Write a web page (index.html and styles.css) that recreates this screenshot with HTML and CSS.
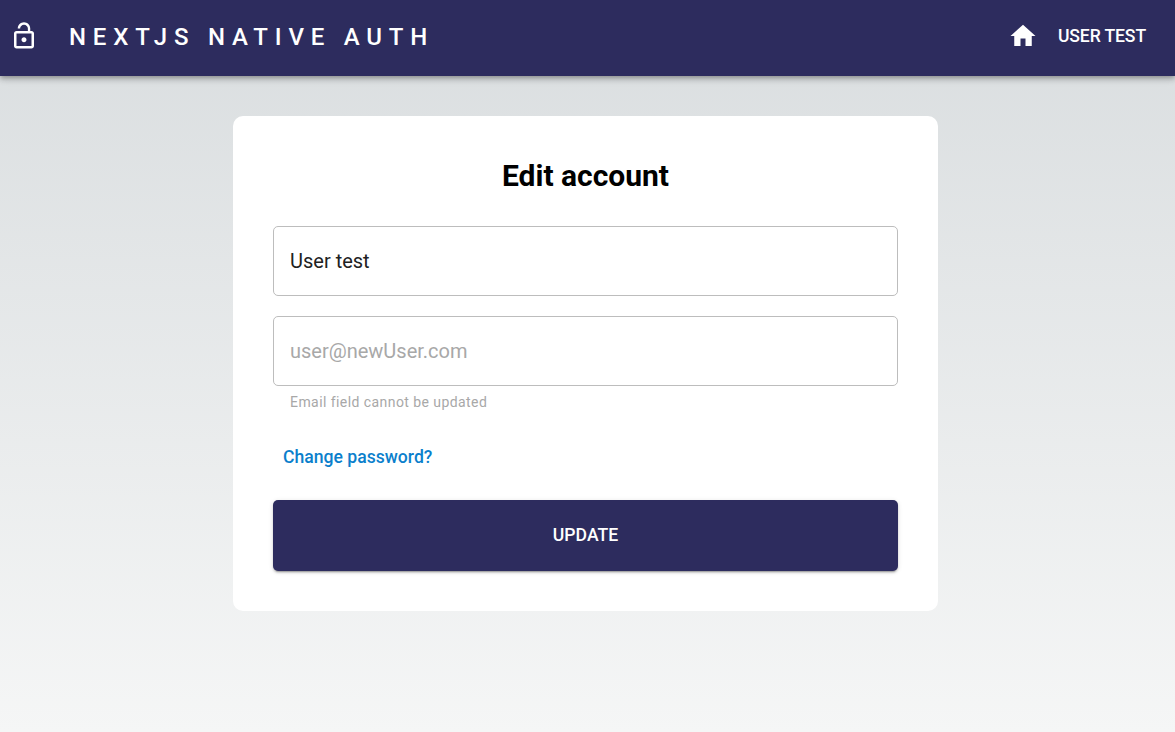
FILE: index.html
```html
<!DOCTYPE html>
<html lang="en">
<head>
    <meta charset="UTF-8">
    <meta name="viewport" content="width=device-width, initial-scale=1.0">
    <title>Edit account</title>
    <link rel="stylesheet" href="styles.css">
</head>
<body>
    <header class="topbar">
        <svg class="topbar-icon" viewBox="0 0 24 24" aria-hidden="true">
            <path d="M12 17c1.1 0 2-.9 2-2s-.9-2-2-2-2 .9-2 2 .9 2 2 2zm6-9h-1V6c0-2.76-2.24-5-5-5S7 3.24 7 6h1.9c0-1.71 1.39-3.1 3.1-3.1 1.71 0 3.1 1.39 3.1 3.1v2H6c-1.1 0-2 .9-2 2v10c0 1.1.9 2 2 2h12c1.1 0 2-.9 2-2V10c0-1.1-.9-2-2-2zm0 12H6V10h12v10z"/>
        </svg>
        <a class="brand" href="#">NEXTJS NATIVE AUTH</a>
        <nav class="topbar-nav">
            <a href="#" aria-label="Home">
                <svg class="topbar-icon" viewBox="0 0 24 24" aria-hidden="true">
                    <path d="M10 20v-6h4v6h5v-8h3L12 3 2 12h3v8z"/>
                </svg>
            </a>
            <a class="user-link" href="#">User test</a>
        </nav>
    </header>

    <main class="page">
        <form class="card">
            <h1>Edit account</h1>
            <input class="field" type="text" value="User test">
            <input class="field field-gap" type="email" placeholder="user@newUser.com" disabled>
            <p class="helper">Email field cannot be updated</p>
            <a class="password-link" href="#">Change password?</a>
            <button type="button">Update</button>
        </form>
    </main>
</body>
</html>
```

FILE: styles.css
```css
* {
    box-sizing: border-box;
}
html, body {
    height: 100%;
}
body {
    margin: 0;
    font-family: Roboto, Arial, sans-serif;
    background: linear-gradient(#d9dddf 0%, #f5f6f6 100%);
    overflow: hidden;
}
a {
    text-decoration: none;
}
.topbar {
    display: flex;
    align-items: center;
    height: 76px;
    padding: 0 29px 4px 9px;
    background-color: #2d2c5e;
    box-shadow: 0 2px 4px -1px rgba(0,0,0,0.2), 0 4px 5px 0 rgba(0,0,0,0.14), 0 1px 10px 0 rgba(0,0,0,0.12);
}
.topbar-icon {
    display: block;
    width: 30px;
    height: 30px;
    fill: #fff;
}
.brand {
    margin: 2px 0 0 30px;
    color: #fff;
    font-size: 24px;
    font-weight: 500;
    letter-spacing: 6.8px;
}
.topbar-nav {
    display: flex;
    align-items: center;
    gap: 20px;
    margin-left: auto;
}
.user-link {
    color: #fff;
    font-size: 17.6px;
    font-weight: 500;
    letter-spacing: -0.12px;
    text-transform: uppercase;
}
.page {
    display: flex;
    justify-content: center;
    padding: 40px 4px 0 0;
}
.card {
    display: flex;
    flex-direction: column;
    width: 705px;
    height: 495px;
    padding: 40px;
    background: #fff;
    border-radius: 10px;
}
h1 {
    margin: 0 0 30px;
    height: 40px;
    color: #000;
    font-size: 30px;
    font-weight: 700;
    line-height: 40px;
    text-align: center;
}
.field {
    width: 100%;
    height: 70px;
    padding: 0 16px;
    border: 1px solid #bdbdbd;
    border-radius: 5px;
    background: #fff;
    color: #212121;
    font-family: inherit;
    font-size: 20px;
    outline: none;
}
.field::placeholder {
    color: #a8a8a8;
    opacity: 1;
}
.field-gap {
    margin-top: 20px;
}
.helper {
    margin: 6px 0 0 17px;
    color: #a8a8a8;
    font-size: 14px;
    line-height: 20px;
    letter-spacing: 0.43px;
}
.password-link {
    margin: 33px 0 0 10px;
    color: #0b7fcc;
    font-size: 17.6px;
    font-weight: 500;
    line-height: 24px;
}
button {
    height: 71px;
    margin-top: 31px;
    padding: 0 0 2px;
    border: none;
    border-radius: 5px;
    background-color: #2d2c5e;
    color: #fff;
    font-family: inherit;
    font-size: 17.6px;
    font-weight: 500;
    text-transform: uppercase;
    cursor: pointer;
    box-shadow: 0 3px 1px -2px rgba(0,0,0,0.2), 0 2px 2px 0 rgba(0,0,0,0.14), 0 1px 5px 0 rgba(0,0,0,0.12);
}
```
